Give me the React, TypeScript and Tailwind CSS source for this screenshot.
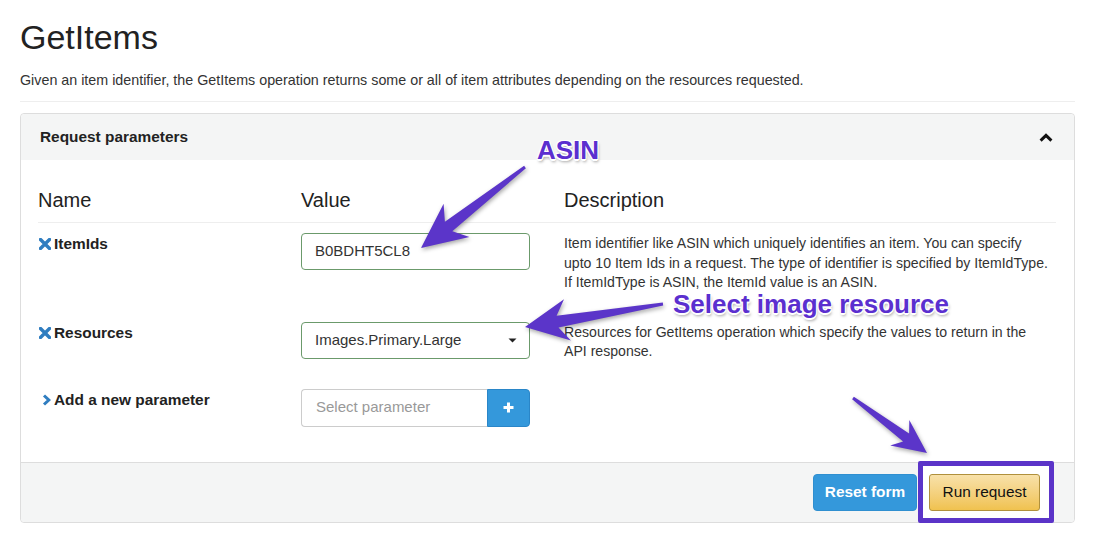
type Pt = [number, number];

// Builds a tapered callout arrow (thin tail, swept-back head) as a polygon point list.
function arrowPoints(tail: Pt, tip: Pt, headLen: number, headHalf: number, w0: number, w1: number, notch: number) {
  const dx = tip[0] - tail[0];
  const dy = tip[1] - tail[1];
  const len = Math.hypot(dx, dy);
  const ux = dx / len;
  const uy = dy / len;
  const nx = -uy;
  const ny = ux;
  const bx = tip[0] - ux * headLen;
  const by = tip[1] - uy * headLen;
  const kx = bx + ux * notch;
  const ky = by + uy * notch;
  const pts: Pt[] = [
    [tail[0] + nx * w0, tail[1] + ny * w0],
    [kx + nx * w1, ky + ny * w1],
    [bx + nx * headHalf, by + ny * headHalf],
    tip,
    [bx - nx * headHalf, by - ny * headHalf],
    [kx - nx * w1, ky - ny * w1],
    [tail[0] - nx * w0, tail[1] - ny * w0],
  ];
  return pts.map((p) => p.map((v) => v.toFixed(1)).join(",")).join(" ");
}

const RemoveIcon = () => (
  <svg width="12" height="12" viewBox="0 0 12 12" className="shrink-0">
    <path d="M1.5 1.5 L10.5 10.5 M10.5 1.5 L1.5 10.5" stroke="#2f7dc0" strokeWidth="3.4" strokeLinecap="square" />
  </svg>
);

const ChevronRight = () => (
  <svg width="9" height="12" viewBox="0 0 9 12" className="shrink-0">
    <path d="M2 1.5 L6.8 6 L2 10.5" stroke="#2f7dc0" strokeWidth="3" fill="none" strokeLinejoin="miter" />
  </svg>
);

const ChevronUp = () => (
  <svg width="14" height="9" viewBox="0 0 14 9">
    <path d="M1.6 7.6 L7 2.4 L12.4 7.6" stroke="#111" strokeWidth="3" fill="none" />
  </svg>
);

const Plus = () => (
  <svg width="11" height="11" viewBox="0 0 11 11">
    <path d="M5.5 0.5 V10.5 M0.5 5.5 H10.5" stroke="#fff" strokeWidth="3" />
  </svg>
);

const Caret = () => (
  <svg width="9" height="5" viewBox="0 0 9 5">
    <path d="M0.5 0.5 H8.5 L4.5 4.5 Z" fill="#222" />
  </svg>
);

const rows = [
  {
    name: "ItemIds",
    icon: <RemoveIcon />,
    desc: "Item identifier like ASIN which uniquely identifies an item. You can specify\nupto 10 Item Ids in a request. The type of identifier is specified by ItemIdType.\nIf ItemIdType is ASIN, the ItemId value is an ASIN.",
  },
  {
    name: "Resources",
    icon: <RemoveIcon />,
    desc: "Resources for GetItems operation which specify the values to return in the\nAPI response.",
  },
];

const callout = "[text-shadow:-1px_-1px_0_#fff,1px_-1px_0_#fff,-1px_1px_0_#fff,1px_1px_0_#fff,0_2px_0_#fff,1px_3px_3px_rgba(0,0,0,0.35)]";

export default function App() {
  return (
    <div className="relative min-h-[540px] w-[1100px] overflow-hidden bg-white font-['Liberation_Sans',Arial,sans-serif] text-[#333]">
      <div className="pl-5 pr-[25px] pt-[19px]">
        <h1 className="text-[34px] leading-[36px] text-[#222]">GetItems</h1>
        <p className="mt-[15px] text-[14.3px] leading-[20px]">
          Given an item identifier, the GetItems operation returns some or all of item attributes depending on the resources requested.
        </p>
        <div className="mt-[11px] border-t border-[#eeeeee]" />

        <div className="mt-[11px] rounded-[4px] border border-[#dddddd]">
          <div className="flex h-[46px] items-center justify-between rounded-t-[4px] bg-[#f4f5f5] pl-[19px] pr-[21px]">
            <span className="text-[15.4px] font-bold text-[#222]">Request parameters</span>
            <ChevronUp />
          </div>

          <div className="pl-[17px] pr-[18px] pt-[26px] pb-[35px]">
            <div className="grid grid-cols-[263px_263px_1fr] border-b border-[#eeeeee] pb-[8px] text-[20px] leading-[28px] text-[#222]">
              <div>Name</div>
              <div>Value</div>
              <div>Description</div>
            </div>

            {/* ItemIds */}
            <div className="mt-[10px] mb-[29px] grid grid-cols-[263px_263px_1fr] items-start">
              <div className="flex items-center gap-[3px] pt-[1px] pl-[1px] text-[15.4px] font-bold leading-[20px] text-[#222]">
                {rows[0].icon}
                {rows[0].name}
              </div>
              <div className="flex h-[37px] w-[229px] items-center rounded-[4px] border border-[#6b9a6b] px-[13px] text-[15px] text-[#333]">
                B0BDHT5CL8
              </div>
              <p className="whitespace-pre-line pt-[1px] text-[14.1px] leading-[19.5px]">{rows[0].desc}</p>
            </div>

            {/* Resources */}
            <div className="mb-[27px] grid grid-cols-[263px_263px_1fr] items-start">
              <div className="flex items-center gap-[3px] pt-[1px] pl-[1px] text-[15.4px] font-bold leading-[20px] text-[#222]">
                {rows[1].icon}
                {rows[1].name}
              </div>
              <div className="flex h-[37px] w-[229px] items-center justify-between rounded-[4px] border border-[#6b9a6b] pl-[13px] pr-[12px] text-[15px] text-[#333]">
                <span>Images.Primary.Large</span>
                <Caret />
              </div>
              <p className="whitespace-pre-line pt-[1px] text-[14.1px] leading-[19.5px]">{rows[1].desc}</p>
            </div>

            {/* Add a new parameter */}
            <div className="grid grid-cols-[263px_263px_1fr] items-start">
              <div className="flex items-center gap-[3px] pt-[1px] pl-[4px] text-[15.4px] font-bold leading-[20px] text-[#222]">
                <ChevronRight />
                Add a new parameter
              </div>
              <div className="flex h-[38px] w-[229px]">
                <div className="flex flex-1 items-center rounded-l-[4px] border border-r-0 border-[#cccccc] px-[14px] text-[15px] text-[#999]">
                  Select parameter
                </div>
                <div className="flex w-[43px] items-center justify-center rounded-r-[4px] border border-[#2a86c8] bg-[#3498db]">
                  <Plus />
                </div>
              </div>
              <div />
            </div>
          </div>

          <div className="flex h-[60px] items-center justify-end gap-[12px] rounded-b-[4px] border-t border-[#dddddd] bg-[#f4f5f5] pr-[34px]">
            <button className="h-[37px] w-[104px] rounded-[4px] border border-[#2f8fd0] bg-[#3498db] text-[15.4px] font-bold text-white">
              Reset form
            </button>
            <div className="relative">
              <div className="absolute -left-[11px] -right-[14px] -top-[13px] -bottom-[12px] rounded-[2px] border-[5px] border-[#5b34c8] bg-white" />
              <button className="relative h-[37px] w-[111px] rounded-[3px] border border-[#b0903c] bg-linear-to-b from-[#f8e1a9] to-[#f0c24e] text-[15.4px] text-[#111]">
                Run request
              </button>
            </div>
          </div>
        </div>
      </div>

      {/* callout arrows and labels */}
      <svg
        className="pointer-events-none absolute left-0 top-0 drop-shadow-[1px_2px_2px_rgba(0,0,0,0.35)]"
        width="1100"
        height="540"
      >
        <polygon points={arrowPoints([525, 167], [421, 248], 45, 21, 1.5, 6, 10)} fill="#5b35c9" />
        <polygon points={arrowPoints([663, 304], [525, 327], 43, 21, 1.5, 6, 10)} fill="#5b35c9" />
        <polygon points={arrowPoints([853, 398], [927, 453], 34, 16, 1.5, 5, 8)} fill="#5b35c9" />
      </svg>
      <div className={`absolute left-[537px] top-[137px] text-[26px] font-bold leading-[26px] text-[#5b2fcf] ${callout}`}>
        ASIN
      </div>
      <div className={`absolute left-[673px] top-[291px] text-[26px] font-bold leading-[26px] text-[#5b2fcf] ${callout}`}>
        Select image resource
      </div>
    </div>
  );
}
